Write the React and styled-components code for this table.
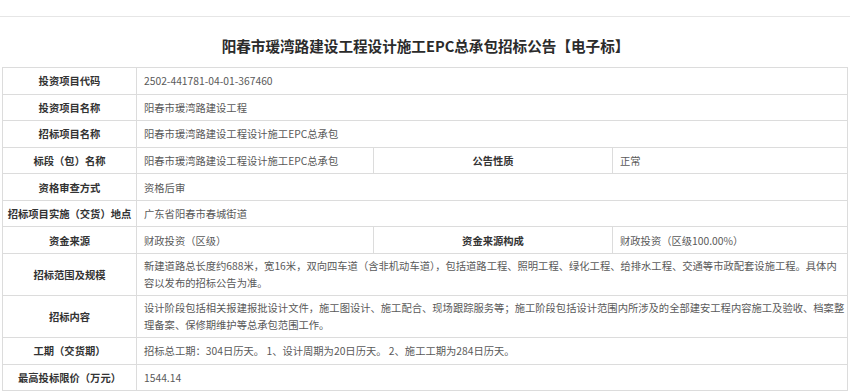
import React from 'react';
import styled, { createGlobalStyle } from 'styled-components';

const GlobalStyle = createGlobalStyle`
    body {
        margin: 0;
        background: #ffffff;
        font-family: "Noto Sans CJK SC", "Noto Sans", sans-serif;
    }
`;

const rows = [
    { label: '投资项目代码', value: '2502-441781-04-01-367460' },
    { label: '投资项目名称', value: '阳春市瑗湾路建设工程' },
    { label: '招标项目名称', value: '阳春市瑗湾路建设工程设计施工EPC总承包' },
    { label: '标段（包）名称', value: '阳春市瑗湾路建设工程设计施工EPC总承包', label2: '公告性质', value2: '正常' },
    { label: '资格审查方式', value: '资格后审' },
    { label: '招标项目实施（交货）地点', value: '广东省阳春市春城街道' },
    { label: '资金来源', value: '财政投资（区级）', label2: '资金来源构成', value2: '财政投资（区级100.00%）' },
    {
        label: '招标范围及规模',
        lines: [
            '新建道路总长度约688米，宽16米，双向四车道（含非机动车道），包括道路工程、照明工程、绿化工程、给排水工程、交通等市政配套设施工程。具体内',
            '容以发布的招标公告为准。',
        ],
    },
    {
        label: '招标内容',
        lines: [
            '设计阶段包括相关报建报批设计文件，施工图设计、施工配合、现场跟踪服务等；施工阶段包括设计范围内所涉及的全部建安工程内容施工及验收、档案整',
            '理备案、保修期维护等总承包范围工作。',
        ],
    },
    { label: '工期（交货期）', value: '招标总工期：304日历天。 1、设计周期为20日历天。 2、施工工期为284日历天。' },
    { label: '最高投标限价（万元）', value: '1544.14' },
];

function App() {
    return (
        <PageStyled>
            <GlobalStyle />
            <TopRule />
            <Title>阳春市瑗湾路建设工程设计施工EPC总承包招标公告【电子标】</Title>
            <InfoTable>
                <colgroup>
                    <col style={{ width: 134 }} />
                    <col style={{ width: 237 }} />
                    <col style={{ width: 239 }} />
                    <col style={{ width: 235 }} />
                </colgroup>
                <tbody>
                    {rows.map((row) => (
                        <Row key={row.label} $tall={!!row.lines}>
                            <Label>{row.label}</Label>
                            {row.label2 ? (
                                <>
                                    <Value>{row.value}</Value>
                                    <Label>{row.label2}</Label>
                                    <Value>{row.value2}</Value>
                                </>
                            ) : (
                                <Value colSpan={3}>
                                    {row.lines
                                        ? row.lines.map((line) => <Line key={line}>{line}</Line>)
                                        : row.value}
                                </Value>
                            )}
                        </Row>
                    ))}
                </tbody>
            </InfoTable>
        </PageStyled>
    );
}

const PageStyled = styled.div`
    width: 850px;
    height: 392px;
    overflow: hidden;
    padding: 16px 3px 0 2px;
    box-sizing: border-box;
`;

const TopRule = styled.div`
    height: 1px;
    background: #e6e6e6;
    margin: 0 -3px 0 -2px;
`;

const Title = styled.h1`
    margin: 0;
    height: 50px;
    box-sizing: border-box;
    padding: 6px 0 0 2px;
    display: flex;
    align-items: center;
    justify-content: center;
    font-size: 14.6px;
    font-weight: 700;
    color: #2b2b2b;
`;

const InfoTable = styled.table`
    width: 845px;
    table-layout: fixed;
    border-collapse: collapse;
    font-size: 10.3px;
`;

const Row = styled.tr`
    height: ${(p) => (p.$tall ? '42px' : '26.57px')};
`;

const Label = styled.td`
    border: 1px solid #dcdcdc;
    text-align: center;
    font-weight: 700;
    color: #333333;
    white-space: nowrap;
    padding: 0;
`;

const Value = styled.td`
    border: 1px solid #dcdcdc;
    color: #595959;
    padding: 0 0 0 7px;
    line-height: 17px;
    white-space: nowrap;
    overflow: hidden;
`;

const Line = styled.div`
    white-space: nowrap;
`;

export default App;
